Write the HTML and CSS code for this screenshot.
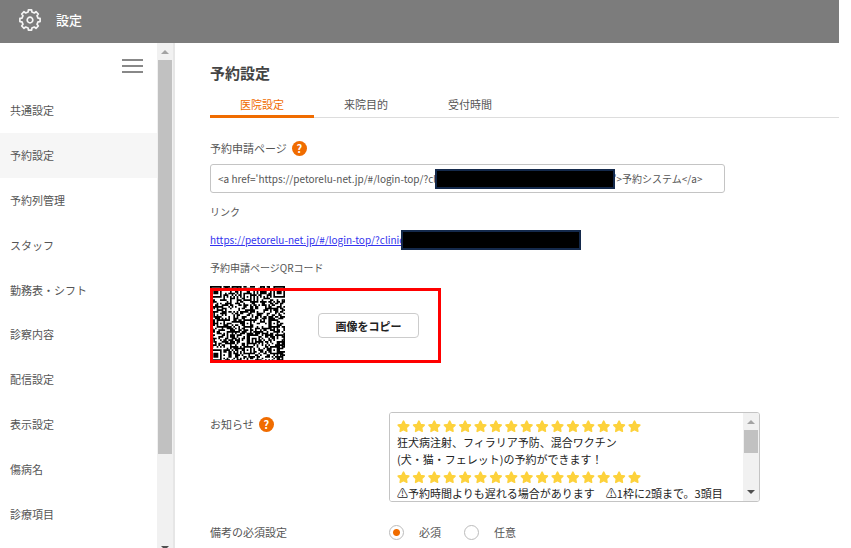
FILE: index.html
```html
<!DOCTYPE html>
<html lang="ja">

<head>
    <meta charset="utf-8">
    <title>設定</title>
    <link rel="stylesheet" href="styles.css">
</head>

<body>
    <header class="header">
        <svg class="gear" viewBox="-12 -12 24 24">
            <path d="M-1.9-8L-1.6-10.1H1.6L1.9-8L4.3-7L6-8.3L8.3-6L7-4.3L8-1.9L10.1-1.6V1.6L8 1.9L7 4.3L8.3 6L6 8.3L4.3 7L1.9 8L1.6 10.1H-1.6L-1.9 8L-4.3 7L-6 8.3L-8.3 6L-7 4.3L-8 1.9L-10.1 1.6V-1.6L-8-1.9L-7-4.3L-8.3-6L-6-8.3L-4.3-7Z" />
            <circle r="2.8" />
        </svg>
        <span>設定</span>
    </header>

    <div class="container">
        <nav class="sidebar">
            <div class="sidebar-body">
                <button class="hamburger" type="button" aria-label="メニュー"><i></i><i></i><i></i></button>
                <div class="menu">
                    <a href="#">共通設定</a>
                    <a href="#" class="active">予約設定</a>
                    <a href="#">予約列管理</a>
                    <a href="#">スタッフ</a>
                    <a href="#">勤務表・シフト</a>
                    <a href="#">診察内容</a>
                    <a href="#">配信設定</a>
                    <a href="#">表示設定</a>
                    <a href="#">傷病名</a>
                    <a href="#">診療項目</a>
                </div>
            </div>
            <div class="scrollbar side-scroll">
                <span class="arrow-up"></span>
                <span class="thumb"></span>
                <span class="arrow-down"></span>
            </div>
        </nav>

        <main class="main">
            <h1>予約設定</h1>
            <div class="tabs">
                <button type="button" class="tab active">医院設定</button>
                <button type="button" class="tab">来院目的</button>
                <button type="button" class="tab">受付時間</button>
            </div>

            <div class="label-row">
                <label for="tagBox">予約申請ページ</label>
                <button type="button" class="help">?</button>
            </div>
            <div class="tag-field">
                <input type="text" id="tagBox" value="&lt;a href='https://petorelu-net.jp/#/login-top/?clinic=0000000000000000000000000000'&gt;予約システム&lt;/a&gt;" readonly>
                <span class="mask tag-mask"></span>
            </div>

            <div class="sub-label">リンク</div>
            <div class="link-row">
                <a href="#">https://petorelu-net.jp/#/login-top/?clinic=</a>
                <span class="mask link-mask"></span>
            </div>

            <div class="sub-label">予約申請ページQRコード</div>
            <div class="qr-row">
                <svg id="qr" class="qr" viewBox="0 0 45 45"><path id="qrPath" /></svg>
                <button type="button" class="copy-btn">画像をコピー</button>
                <span class="frame"></span>
            </div>

            <div class="form-row">
                <div class="form-label">
                    <label for="news">お知らせ</label>
                    <button type="button" class="help">?</button>
                </div>
                <div class="news-box">
                    <textarea id="news">

狂犬病注射、フィラリア予防、混合ワクチン
(犬・猫・フェレット)の予約ができます！

⚠予約時間よりも遅れる場合があります　⚠1枠に2頭まで。3頭目</textarea>
                    <svg class="stars" viewBox="0 0 246 68">
                        <defs>
                            <path id="star" d="M7.5 3.2L9.2 6.5L12.8 7.1L10.2 9.7L10.8 13.3L7.5 11.6L4.2 13.3L4.8 9.7L2.2 7.1L5.8 6.5Z" />
                        </defs>
                    </svg>
                    <div class="scrollbar">
                        <span class="arrow-up"></span>
                        <span class="thumb"></span>
                        <span class="arrow-down"></span>
                    </div>
                </div>
            </div>

            <div class="form-row last">
                <div class="form-label">備考の必須設定</div>
                <div class="radios">
                    <label><input type="radio" name="memo" checked>必須</label>
                    <label><input type="radio" name="memo">任意</label>
                </div>
            </div>
        </main>
    </div>
    <script src="script.js"></script>
</body>

</html>
```
FILE: styles.css
```css
* {
    box-sizing: border-box;
}

body {
    margin: 0;
    padding-right: 12px;
    height: 100vh;
    overflow: hidden;
    display: flex;
    flex-direction: column;
    background-color: #fff;
    color: #555;
    font-family: "Noto Sans CJK JP", sans-serif;
    font-size: 11px;
    line-height: 20px;
}

button,
input,
textarea {
    font-family: inherit;
    font-size: 11px;
    line-height: 20px;
    color: inherit;
    margin: 0;
    padding: 0;
}

.header {
    flex: none;
    height: 43px;
    padding: 0 18px 3px;
    display: flex;
    align-items: center;
    gap: 14px;
    background-color: #7c7c7c;
    color: #fff;
    font-size: 13px;
    font-weight: 500;
}

.gear {
    width: 24px;
    height: 24px;
    fill: none;
    stroke: #f4f4f4;
    stroke-width: 1.7;
    stroke-linejoin: round;
}

.container {
    flex: 1;
    min-height: 0;
    display: flex;
}

/* sidebar */
.sidebar {
    flex: none;
    width: 175px;
    display: flex;
    border-right: 2px solid #e6e6e6;
}

.sidebar-body {
    flex: 1;
    display: flex;
    flex-direction: column;
    padding: 16px 0 12px;
}

.hamburger {
    align-self: flex-end;
    width: 21px;
    margin: 0 14px 15px 0;
    display: flex;
    flex-direction: column;
    gap: 4px;
    border: none;
    background: none;
}

.hamburger i {
    width: 21px;
    height: 2px;
    background-color: #888;
}

.menu {
    flex: 1;
    display: grid;
    grid-auto-rows: 1fr;
}

.menu a {
    display: flex;
    align-items: center;
    padding-left: 10px;
    color: #555;
    text-decoration: none;
}

.menu a.active {
    background-color: #f6f6f6;
}

/* scrollbars */
.scrollbar {
    flex: none;
    width: 16px;
    display: flex;
    flex-direction: column;
    align-items: center;
    background-color: #f1f1f1;
}

.thumb {
    width: 14px;
    height: 23px;
    background-color: #c1c1c1;
}

.arrow-up,
.arrow-down {
    border: 4px solid transparent;
}

.arrow-up {
    margin: 7px 0 6px;
    border-bottom-color: #a3a3a3;
    border-top-width: 0;
}

.arrow-down {
    margin-top: auto;
    margin-bottom: 7px;
    border-top-color: #505050;
    border-bottom-width: 0;
}

.side-scroll .thumb {
    height: 78%;
}

.side-scroll .arrow-down {
    margin-bottom: -2px;
}

/* main */
.main {
    flex: 1;
    min-width: 0;
    padding: 19px 0 0 35px;
}

h1 {
    margin: 0 0 7px;
    font-size: 15px;
    line-height: 22px;
    font-weight: 700;
    color: #444;
}

.tabs {
    display: flex;
    margin-bottom: 20px;
    box-shadow: inset 0 -1px #ddd;
}

.tab {
    width: 104px;
    padding: 3px 0 1px;
    border: none;
    border-bottom: 3px solid transparent;
    background: none;
}

.tab.active {
    color: #f06c00;
    border-bottom-color: #f06c00;
}

.label-row,
.form-label {
    display: flex;
    align-items: center;
    gap: 5px;
}

.help {
    width: 15px;
    height: 15px;
    border: none;
    border-radius: 50%;
    background-color: #f06c00;
    color: #fff;
    font-weight: 700;
    line-height: 15px;
}

.tag-field {
    position: relative;
    margin: 6px 0 9px;
}

.tag-field input {
    display: block;
    width: 515px;
    max-width: 100%;
    height: 29px;
    padding: 0 7px;
    border: 1px solid #c4c4c4;
    border-radius: 3px;
    font-size: 10px;
}

.mask {
    position: absolute;
    height: 20px;
    width: 180px;
    border: 2px solid #14294b;
    background-color: #000;
}

.tag-mask {
    left: 225px;
    top: 5px;
}

.sub-label {
    font-size: 10px;
}

.link-row {
    position: relative;
    margin: 8px 0;
    font-size: 10px;
}

.link-row a {
    color: #33e;
}

.link-mask {
    left: 191px;
    top: 0;
}

.qr-row {
    position: relative;
    display: flex;
    align-items: center;
    gap: 33px;
    margin: 8px 0 51px;
}

.qr {
    width: 75px;
    height: 75px;
}

.copy-btn {
    width: 101px;
    height: 25px;
    margin-top: 4px;
    border: 1px solid #ccc;
    border-radius: 4px;
    background-color: #fff;
    color: #222;
    font-weight: 700;
}

.frame {
    position: absolute;
    left: 0;
    top: 2px;
    width: 231px;
    height: 75px;
    border: 3px solid #f00;
}

.form-row {
    display: grid;
    grid-template-columns: 179px 1fr;
    align-items: start;
}

.form-row.last {
    margin-top: 20px;
}

.form-label {
    padding-top: 2px;
}

.last .form-label {
    padding-top: 0;
}

.news-box {
    position: relative;
    display: flex;
    width: 371px;
    max-width: 100%;
    height: 90px;
    border: 1px solid #c4c4c4;
    border-radius: 3px;
    overflow: hidden;
}

.news-box textarea {
    flex: 1;
    min-width: 0;
    padding: 4px 0 0 7px;
    border: none;
    outline: none;
    resize: none;
    overflow: hidden;
    line-height: 17px;
    color: #222;
}

/* star lines of the notice */
.stars {
    position: absolute;
    left: 6px;
    top: 5px;
    width: 246px;
    height: 68px;
    fill: #fdd23c;
    stroke: #fdd23c;
    stroke-width: 1.6;
    stroke-linejoin: round;
    pointer-events: none;
}

.radios {
    display: flex;
    gap: 23px;
}

.radios label {
    display: flex;
    align-items: center;
    gap: 15px;
}

.radios input {
    appearance: none;
    width: 15px;
    height: 15px;
    border: 1px solid #bbb;
    border-radius: 50%;
    background-color: #fff;
}

.radios input:checked {
    background-image: radial-gradient(circle, #f06c00 3px, transparent 4px);
}
```
FILE: script.js
```js
var size = 45;
var seed = 11;

function rand() {
    seed = (seed * 16807) % 2147483647;
    return seed / 2147483647;
}

// square ring pattern with a dark centre, or -1 when outside of it
function ring(x, y, cx, cy, r) {
    var d = Math.max(Math.abs(x - cx), Math.abs(y - cy));
    if (d > r) return -1;
    if (r == 4) return d == 4 || d == 2 ? 0 : 1;
    return d == 1 ? 0 : 1;
}

function module(x, y) {
    var marks = [[3, 3, 4], [41, 3, 4], [3, 41, 4], [22, 6, 2], [6, 22, 2], [22, 22, 2], [38, 22, 2], [22, 38, 2], [38, 38, 2]];
    for (var i = 0; i < marks.length; i++) {
        var v = ring(x, y, marks[i][0], marks[i][1], marks[i][2]);
        if (v >= 0) return v;
    }
    if (x == 6 || y == 6) return (x + y) % 2 == 0;
    return rand() < 0.53;
}

var d = "";
for (var y = 0; y < size; y++) {
    for (var x = 0; x < size; x++) {
        if (module(x, y)) d += "M" + x + " " + y + "h1v1h-1z";
    }
}
document.getElementById("qrPath").setAttribute("d", d);

var stars = document.querySelector(".stars");
for (var row = 0; row < 2; row++) {
    for (var n = 0; n < 16; n++) {
        var use = document.createElementNS("http://www.w3.org/2000/svg", "use");
        use.setAttribute("href", "#star");
        use.setAttribute("x", n * 15.4);
        use.setAttribute("y", row * 51);
        stars.appendChild(use);
    }
}
```
